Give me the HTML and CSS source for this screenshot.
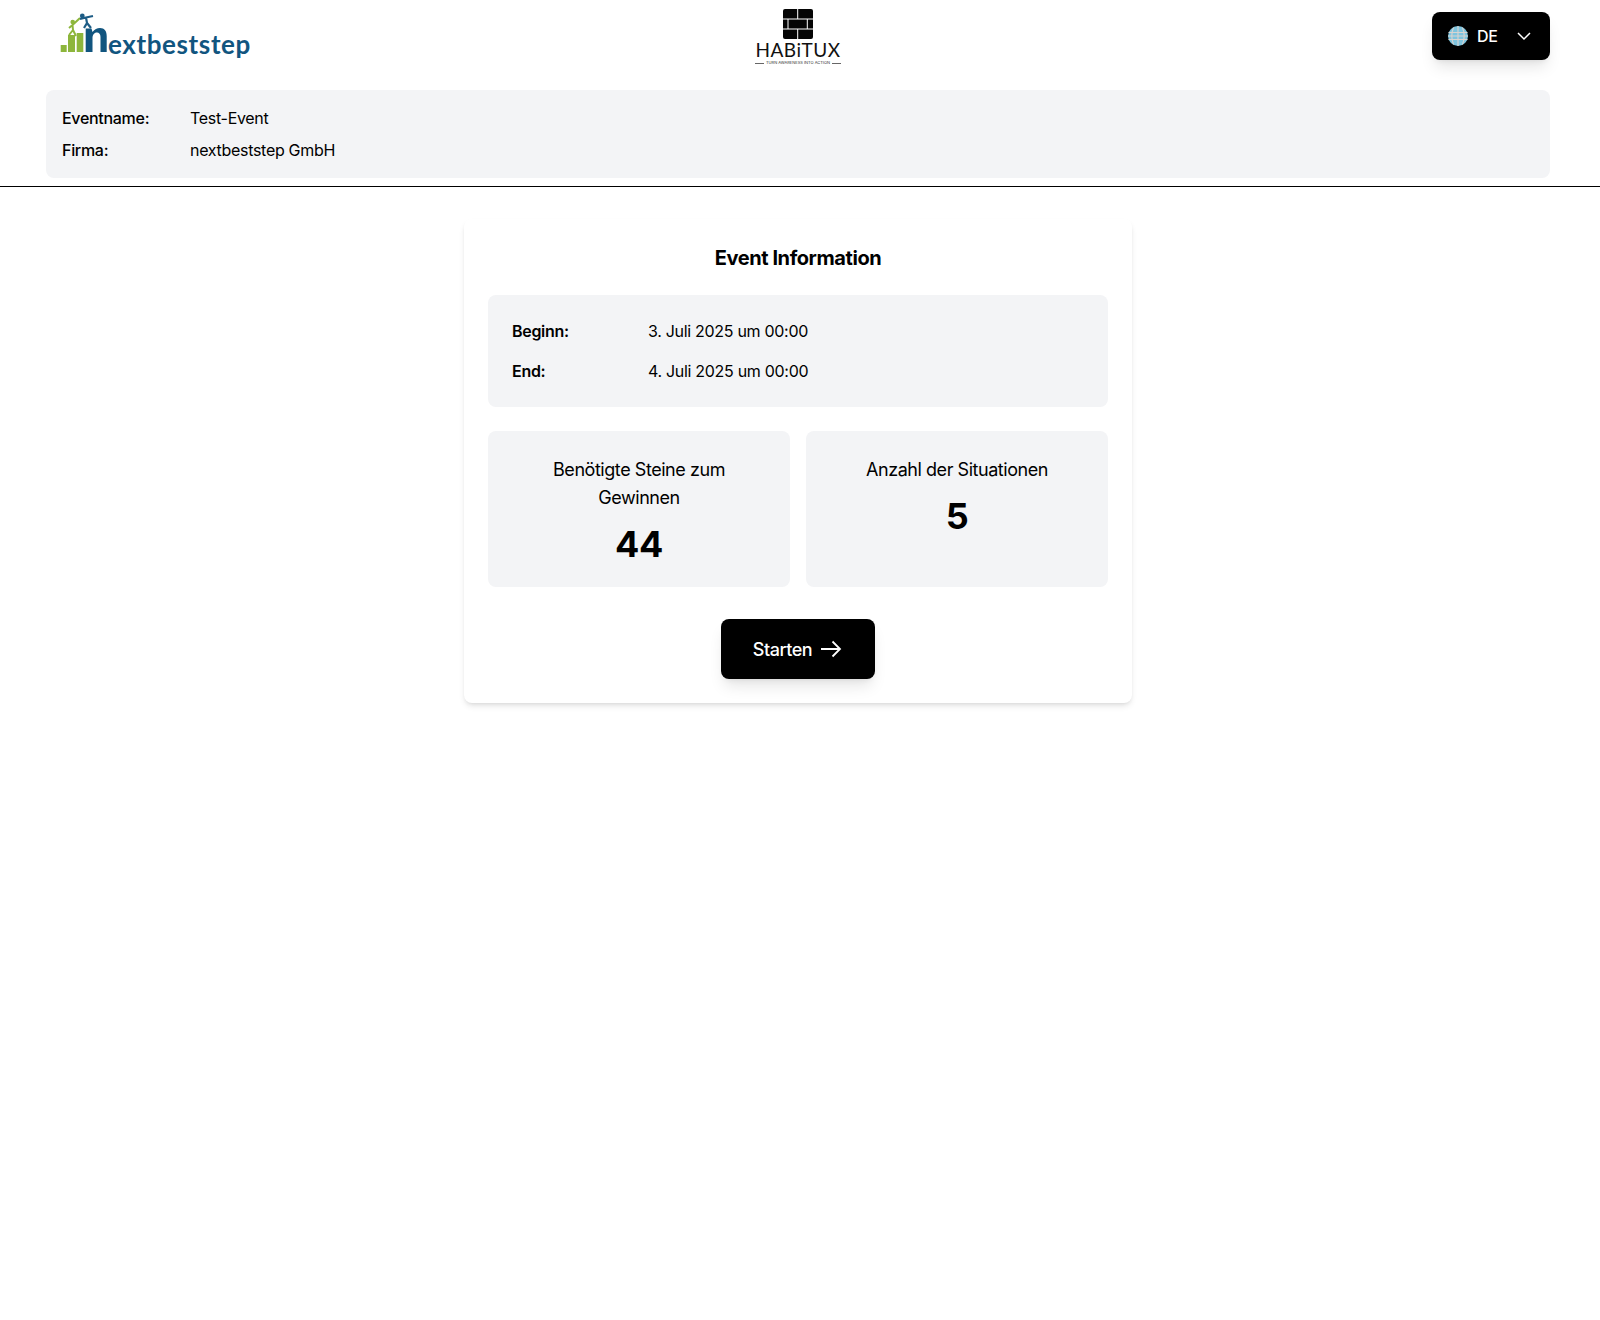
FILE: index.html
```html
<!DOCTYPE html>
<html lang="de">
<head>
<meta charset="utf-8">
<title>Event Information</title>
<link rel="stylesheet" href="styles.css">
</head>
<body>
<header class="top">
  <div class="brand-row">
    <div class="logo-nbs">
      <svg class="nbs-mark" width="48" height="45" viewBox="0 0 48 45">
        <rect x="0.700" y="32" width="6" height="7" fill="#8db63c"/>
        <rect x="8" y="22" width="7" height="17" fill="#8db63c"/>
        <rect x="16.700" y="20" width="6.600" height="19" fill="#8db63c"/>
        <circle cx="12.700" cy="9" r="2.300" fill="#8db63c"/>
        <path d="M20 5L12.500 12L9 15M12.500 12L13 17L9 22M13 17L16 23" fill="none" stroke="#8db63c" stroke-width="2"/>
        <circle cx="22.300" cy="3" r="2.400" fill="#1d5c85"/>
        <path d="M20 6L26 4.500L33 3M26 4.500L27 10L24 15M27 10L31 15" fill="none" stroke="#1d5c85" stroke-width="2.200"/>
        <path d="M25.700 39V15.500H31.500L32.500 19C34.500 16.500 37 15 40 15C44.500 15 46.700 18 46.700 23V39H40.500V24C40.500 21 39 19.500 37 19.500C34 19.500 32.500 22 32.500 25V39Z" fill="#11557f"/>
      </svg>
      <span class="nbs-text">extbeststep</span>
    </div>
    <div class="logo-hab">
      <svg width="30" height="30" viewBox="0 0 30 30">
        <rect width="30" height="30" rx="2" fill="#050505"/>
        <path d="M0 10h30M0 20h30M14.700 0v10M5 10v10M24.300 10v10M14.700 20v10" stroke="#fff" stroke-width="1"/>
      </svg>
      <span class="hab-name">HABiTUX</span>
      <span class="hab-tag"><i class="hab-dash"></i>TURN AWARENESS INTO ACTION<i class="hab-dash"></i></span>
    </div>
    <button class="lang">
      <svg width="20" height="20" viewBox="0 0 20 20">
        <circle cx="10" cy="10" r="10" fill="#7fc4de"/>
        <path d="M0.500 6.500h19M0 10h20M0.500 13.500h19M10 0v20M5.500 1.500c-2 5-2 12 0 17M14.500 1.500c2 5 2 12 0 17" stroke="#d9d4d0" stroke-width="1.100" fill="none"/>
      </svg>
      <span>DE</span>
      <svg class="chev" width="16" height="16" viewBox="0 0 16 16"><path d="M2 5l6 6 6-6" fill="none" stroke="#fff" stroke-width="1.500"/></svg>
    </button>
  </div>
  <div class="event-bar">
    <div class="event-row"><span class="event-key">Eventname:</span><span>Test-Event</span></div>
    <div class="event-row"><span class="event-key">Firma:</span><span>nextbeststep GmbH</span></div>
  </div>
</header>
<main class="main">
  <section class="card">
    <h1 class="title">Event Information</h1>
    <div class="dates">
      <div class="date-row"><span class="date-key">Beginn:</span><span>3. Juli 2025 um 00:00</span></div>
      <div class="date-row"><span class="date-key">End:</span><span>4. Juli 2025 um 00:00</span></div>
    </div>
    <div class="stats">
      <div class="stat"><div class="stat-label">Benötigte Steine zum Gewinnen</div><div class="stat-value">44</div></div>
      <div class="stat"><div class="stat-label">Anzahl der Situationen</div><div class="stat-value">5</div></div>
    </div>
    <div class="action">
      <button class="start"><span>Starten</span>
        <svg width="24" height="24" viewBox="0 0 24 24"><path d="M2 12h19M13.500 4.500L21 12l-7.500 7.500" fill="none" stroke="#fff" stroke-width="1.800"/></svg>
      </button>
    </div>
  </section>
</main>
</body>
</html>
```
FILE: styles.css
```css
* { box-sizing: border-box; }
html, body { margin: 0; padding: 0; }
body { background: #fff; color: #000; font-family: Inter, "Liberation Sans", sans-serif; font-size: 16px; letter-spacing: -0.3px; min-height: 1320px; }
.top { padding: 0 50px 8px 46px; border-bottom: 1px solid #000; height: 187px; }
.brand-row { display: grid; grid-template-columns: 1fr auto 1fr; align-items: start; height: 90px; }
.logo-nbs { display: flex; align-items: flex-start; margin: 13px 0 0 14px; height: 45px; }
.nbs-mark { flex: none; }
.nbs-text { font-family: Lato, sans-serif; font-weight: 700; font-size: 26px; line-height: 32px; color: #11557f; margin: 15px 0 0 0; letter-spacing: 0.6px; }
.logo-hab { display: flex; flex-direction: column; align-items: center; padding-top: 9px; }
.hab-name { font-family: Lato, sans-serif; font-size: 19px; line-height: 19px; letter-spacing: 0.5px; margin-top: 1px; color: #111; }
.hab-tag { display: flex; align-items: center; gap: 2px; font-size: 4px; line-height: 6px; letter-spacing: 0; color: #333; margin-top: 1px; }
.hab-dash { display: block; width: 9px; height: 1px; background: #666; }
.lang { justify-self: end; margin-top: 12px; width: 118px; height: 48px; background: #000; color: #fff; border: 0; border-radius: 8px; display: flex; align-items: center; padding: 0 18px 0 16px; font: 500 16px Inter, sans-serif; letter-spacing: -0.2px; box-shadow: 0 10px 15px -3px rgba(0,0,0,.1), 0 4px 6px -4px rgba(0,0,0,.1); }
.lang span { margin-left: 9px; }
.chev { margin-left: auto; }
.event-bar { background: #f3f4f6; border-radius: 8px; height: 88px; padding: 16px; }
.event-row { display: flex; font-size: 16px; line-height: 24px; margin-bottom: 8px; }
.event-key { width: 128px; font-weight: 500; }
.main { padding: 32px 50px 0 46px; display: flex; justify-content: center; }
.card { width: 668px; padding: 25px 24px 24px; background: #fff; border-radius: 8px; box-shadow: 0 4px 6px -1px rgba(0,0,0,.1), 0 2px 4px -2px rgba(0,0,0,.1); }
.title { margin: 0 0 23px; font-size: 20px; line-height: 28px; font-weight: 700; letter-spacing: -0.42px; text-align: center; }
.dates { background: #f3f4f6; border-radius: 8px; padding: 24px; height: 112px; margin-bottom: 24px; }
.date-row { display: flex; line-height: 24px; margin-bottom: 16px; }
.date-key { width: 136px; font-weight: 600; }
.stats { display: grid; grid-template-columns: 1fr 1fr; gap: 16px; margin-bottom: 32px; }
.stat { background: #f3f4f6; border-radius: 8px; padding: 25px 24px 0; text-align: center; height: 156px; }
.stat-label { font-size: 18px; line-height: 28px; letter-spacing: -0.45px; margin-bottom: 12px; }
.stat-value { font-size: 36px; line-height: 40px; font-weight: 750; letter-spacing: -0.4px; }
.action { display: flex; justify-content: center; }
.start { width: 154px; height: 60px; background: #000; color: #fff; border: 0; border-radius: 8px; display: flex; align-items: center; justify-content: center; gap: 7px; font: 500 18px Inter, sans-serif; letter-spacing: -0.45px; box-shadow: 0 10px 15px -3px rgba(0,0,0,.1), 0 4px 6px -4px rgba(0,0,0,.1); }
```
